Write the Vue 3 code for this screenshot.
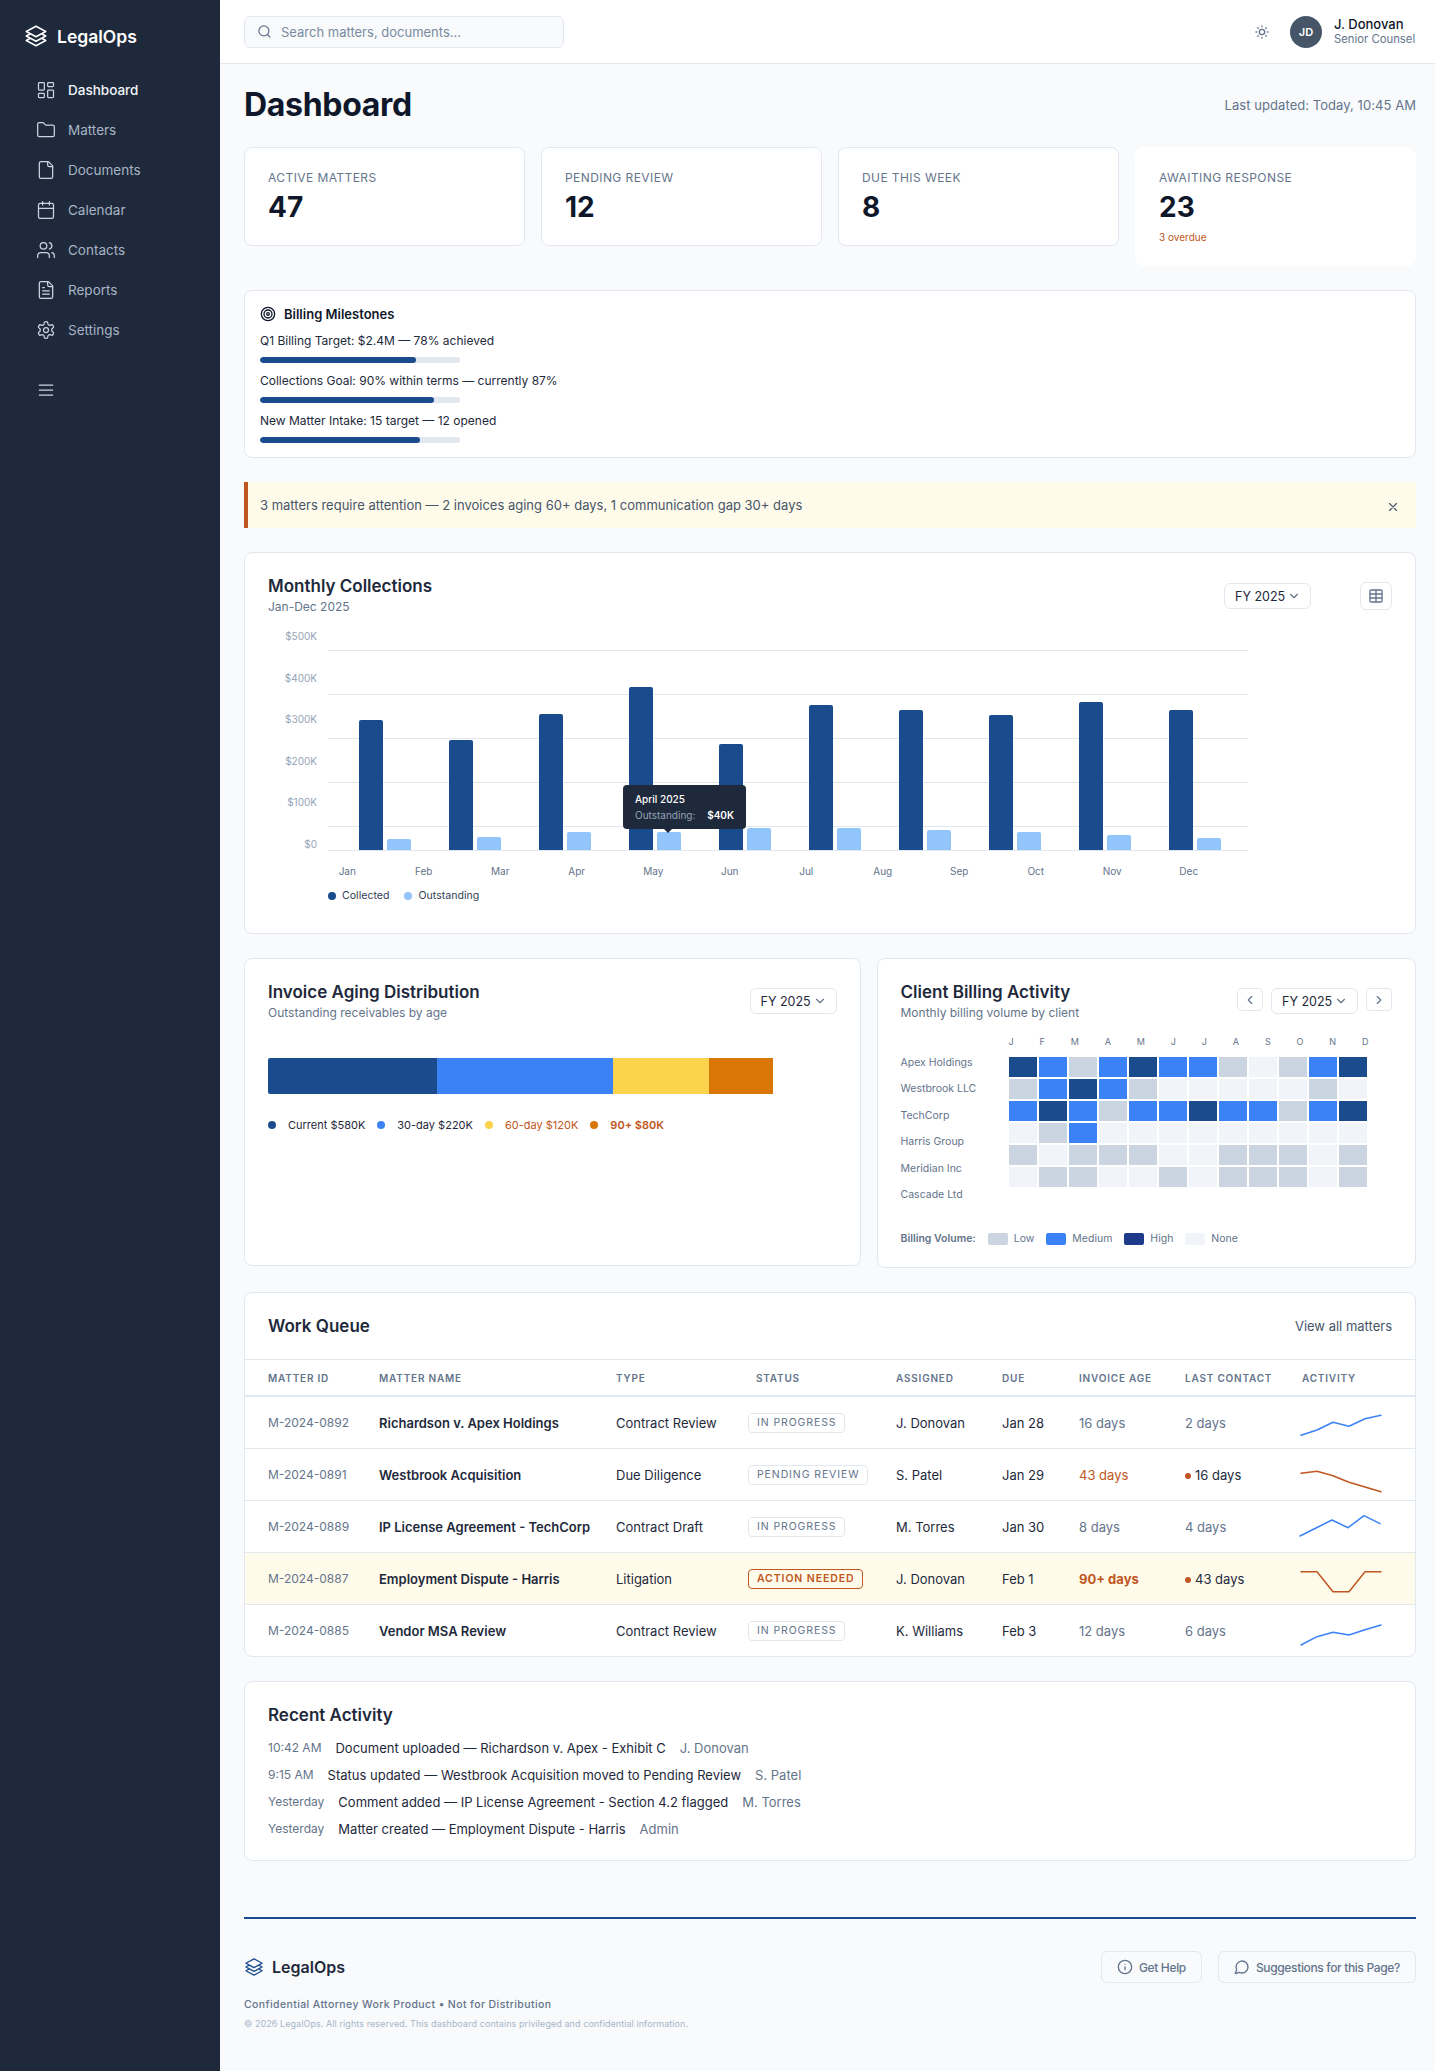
<script setup>
const nav = [
  { label: 'Dashboard', icon: 'dash', active: true },
  { label: 'Matters', icon: 'folder' },
  { label: 'Documents', icon: 'file' },
  { label: 'Calendar', icon: 'cal' },
  { label: 'Contacts', icon: 'users' },
  { label: 'Reports', icon: 'report' },
  { label: 'Settings', icon: 'gear' }
]
const stats = [
  { label: 'Active Matters', value: '47' },
  { label: 'Pending Review', value: '12' },
  { label: 'Due This Week', value: '8' },
  { label: 'Awaiting Response', value: '23', note: '3 overdue' }
]
const milestones = [
  { text: 'Q1 Billing Target: $2.4M — 78% achieved', pct: 78 },
  { text: 'Collections Goal: 90% within terms — currently 87%', pct: 87 },
  { text: 'New Matter Intake: 15 target — 12 opened', pct: 80 }
]
const yLabels = ['$500K', '$400K', '$300K', '$200K', '$100K', '$0']
const gridTops = [20, 64, 108, 152, 196]
const groups = [
  [130, 11], [110, 13], [136, 18], [163, 18], [106, 22],
  [145, 22], [140, 20], [135, 18], [148, 15], [140, 12]
]
const months = ['Jan', 'Feb', 'Mar', 'Apr', 'May', 'Jun', 'Jul', 'Aug', 'Sep', 'Oct', 'Nov', 'Dec']
const aging = [
  { w: 169, c: '#1a4b8c' }, { w: 176, c: '#3b82f6' }, { w: 96, c: '#fcd34d' }, { w: 64, c: '#d97706' }
]
const agingLegend = [
  { t: 'Current $580K', c: '#1a4b8c', k: '' },
  { t: '30-day $220K', c: '#3b82f6', k: '' },
  { t: '60-day $120K', c: '#fcd34d', k: 'warn' },
  { t: '90+ $80K', c: '#d97706', k: 'warn strong' }
]
const clients = ['Apex Holdings', 'Westbrook LLC', 'TechCorp', 'Harris Group', 'Meridian Inc', 'Cascade Ltd']
const letters = ['J', 'F', 'M', 'A', 'M', 'J', 'J', 'A', 'S', 'O', 'N', 'D']
const heat = [
  'HMLMHMMLNLMH', 'LMHMLNNNNNLN', 'MHMLMMHMMLMH', 'NLMNNNNNNNNN', 'LNLLLNNLLLNL', 'NLLNNLNLLLNL'
].join('').split('')
const legend = [
  { t: 'Low', c: '#cbd5e1' }, { t: 'Medium', c: '#3b82f6' }, { t: 'High', c: '#1e3a8a' }, { t: 'None', c: '#f1f5f9' }
]
const columns = ['Matter ID', 'Matter Name', 'Type', 'Status', 'Assigned', 'Due', 'Invoice Age', 'Last Contact', 'Activity']
const widths = [134, 237, 140, 140, 106, 77, 106, 117, 115]
const rows = [
  { id: 'M-2024-0892', name: 'Richardson v. Apex Holdings', type: 'Contract Review', status: 'In Progress', who: 'J. Donovan', due: 'Jan 28', age: '16 days', contact: '2 days', pts: '0,28.3 16,23 32,15.3 48,19.3 64,11.7 80,8.3' },
  { id: 'M-2024-0891', name: 'Westbrook Acquisition', type: 'Due Diligence', status: 'Pending Review', who: 'S. Patel', due: 'Jan 29', age: '43 days', ageK: 'warn', contact: '16 days', dot: true, pts: '0,14.3 16,12.3 32,16.7 48,23.3 64,28 80,32.7', warn: true },
  { id: 'M-2024-0889', name: 'IP License Agreement - TechCorp', type: 'Contract Draft', status: 'In Progress', who: 'M. Torres', due: 'Jan 30', age: '8 days', contact: '4 days', pts: '-1,25 15,17 31,9 47,16.7 63,4.7 79,12.7' },
  { id: 'M-2024-0887', name: 'Employment Dispute - Harris', type: 'Litigation', status: 'Action Needed', action: true, who: 'J. Donovan', due: 'Feb 1', age: '90+ days', ageK: 'warn strong', contact: '43 days', dot: true, pts: '0,8.7 16,8.7 32,28.7 48,28.7 64,8.7 80,8.7', warn: true, hl: true },
  { id: 'M-2024-0885', name: 'Vendor MSA Review', type: 'Contract Review', status: 'In Progress', who: 'K. Williams', due: 'Feb 3', age: '12 days', contact: '6 days', pts: '0,30 16,21.7 32,17.3 48,20 64,14.7 80,10' }
]
const activity = [
  { time: '10:42 AM', text: 'Document uploaded — Richardson v. Apex - Exhibit C', who: 'J. Donovan' },
  { time: '9:15 AM', text: 'Status updated — Westbrook Acquisition moved to Pending Review', who: 'S. Patel' },
  { time: 'Yesterday', text: 'Comment added — IP License Agreement - Section 4.2 flagged', who: 'M. Torres' },
  { time: 'Yesterday', text: 'Matter created — Employment Dispute - Harris', who: 'Admin' }
]
</script>

<template>
  <div class="app">
    <aside class="sidebar">
      <div class="brand">
        <svg class="brand-ico" viewBox="0 0 24 24" fill="none" stroke="currentColor" stroke-width="1.5" stroke-linecap="round" stroke-linejoin="round"><path d="M6.429 9.75 2.25 12l4.179 2.25m0-4.5 5.571 3 5.571-3m-11.142 0L2.25 7.5 12 2.25l9.75 5.25-4.179 2.25m0 0L21.75 12l-4.179 2.25m0 0 4.179 2.25L12 21.75 2.25 16.5l4.179-2.25m11.142 0-5.571 3-5.571-3"/></svg>
        <span>LegalOps</span>
      </div>
      <nav class="nav">
        <a v-for="n in nav" :key="n.label" class="nav-item" :class="{ active: n.active }">
          <svg class="nav-ico" viewBox="0 0 24 24" fill="none" stroke="currentColor" stroke-width="1.5" stroke-linecap="round" stroke-linejoin="round">
            <template v-if="n.icon === 'dash'"><rect x="3" y="3" width="7" height="9" rx="1"/><rect x="14" y="3" width="7" height="5" rx="1"/><rect x="14" y="12" width="7" height="9" rx="1"/><rect x="3" y="16" width="7" height="5" rx="1"/></template>
            <path v-else-if="n.icon === 'folder'" d="M20 20a2 2 0 0 0 2-2V8a2 2 0 0 0-2-2h-7.9a2 2 0 0 1-1.69-.9L9.6 3.9A2 2 0 0 0 7.93 3H4a2 2 0 0 0-2 2v13a2 2 0 0 0 2 2Z"/>
            <template v-else-if="n.icon === 'file'"><path d="M15 2H6a2 2 0 0 0-2 2v16a2 2 0 0 0 2 2h12a2 2 0 0 0 2-2V7Z"/><path d="M14 2v4a2 2 0 0 0 2 2h4"/></template>
            <template v-else-if="n.icon === 'cal'"><path d="M8 2v4M16 2v4"/><rect x="3" y="4" width="18" height="18" rx="2"/><path d="M3 10h18"/></template>
            <template v-else-if="n.icon === 'users'"><path d="M16 21v-2a4 4 0 0 0-4-4H6a4 4 0 0 0-4 4v2"/><circle cx="9" cy="7" r="4"/><path d="M22 21v-2a4 4 0 0 0-3-3.87"/><path d="M16 3.13a4 4 0 0 1 0 7.75"/></template>
            <template v-else-if="n.icon === 'report'"><path d="M15 2H6a2 2 0 0 0-2 2v16a2 2 0 0 0 2 2h12a2 2 0 0 0 2-2V7Z"/><path d="M14 2v4a2 2 0 0 0 2 2h4"/><path d="M10 9H8M16 13H8M16 17H8"/></template>
            <template v-else><path d="M12.22 2h-.44a2 2 0 0 0-2 2v.18a2 2 0 0 1-1 1.73l-.43.25a2 2 0 0 1-2 0l-.15-.08a2 2 0 0 0-2.73.73l-.22.38a2 2 0 0 0 .73 2.73l.15.1a2 2 0 0 1 1 1.72v.51a2 2 0 0 1-1 1.74l-.15.09a2 2 0 0 0-.73 2.73l.22.38a2 2 0 0 0 2.73.73l.15-.08a2 2 0 0 1 2 0l.43.25a2 2 0 0 1 1 1.73V20a2 2 0 0 0 2 2h.44a2 2 0 0 0 2-2v-.18a2 2 0 0 1 1-1.73l.43-.25a2 2 0 0 1 2 0l.15.08a2 2 0 0 0 2.73-.73l.22-.39a2 2 0 0 0-.73-2.73l-.15-.08a2 2 0 0 1-1-1.74v-.5a2 2 0 0 1 1-1.74l.15-.09a2 2 0 0 0 .73-2.73l-.22-.38a2 2 0 0 0-2.73-.73l-.15.08a2 2 0 0 1-2 0l-.43-.25a2 2 0 0 1-1-1.73V4a2 2 0 0 0-2-2z"/><circle cx="12" cy="12" r="3"/></template>
          </svg>
          <span>{{ n.label }}</span>
        </a>
      </nav>
      <div class="burger">
        <svg viewBox="0 0 24 24" fill="none" stroke="currentColor" stroke-width="1.5" stroke-linecap="round"><path d="M4 6h16M4 12h16M4 18h16"/></svg>
      </div>
    </aside>

    <div class="main">
      <header class="topbar">
        <div class="search">
          <svg viewBox="0 0 24 24" fill="none" stroke="currentColor" stroke-width="2" stroke-linecap="round"><circle cx="11" cy="11" r="8"/><path d="m21 21-4.3-4.3"/></svg>
          <span>Search matters, documents...</span>
        </div>
        <div class="top-right">
          <svg class="sun" viewBox="0 0 24 24" fill="none" stroke="currentColor" stroke-width="2" stroke-linecap="round"><circle cx="12" cy="12" r="4"/><path d="M12 3v1M12 20v1M3 12h1M20 12h1M5.6 5.6l.7.7M17.7 17.7l.7.7M5.6 18.4l.7-.7M17.7 6.3l.7-.7"/></svg>
          <div class="avatar">JD</div>
          <div class="user">
            <div class="user-name">J. Donovan</div>
            <div class="user-role">Senior Counsel</div>
          </div>
        </div>
      </header>

      <main class="content">
        <div class="page-head">
          <h1>Dashboard</h1>
          <span class="updated">Last updated: Today, 10:45 AM</span>
        </div>

        <section class="stats">
          <div v-for="s in stats" :key="s.label" class="stat" :class="{ plain: s.note }">
            <div class="stat-label">{{ s.label }}</div>
            <div class="stat-value">{{ s.value }}</div>
            <div v-if="s.note" class="stat-note">{{ s.note }}</div>
          </div>
        </section>

        <section class="card milestones">
          <div class="ms-title">
            <svg viewBox="0 0 24 24" fill="none" stroke="currentColor" stroke-width="2"><circle cx="12" cy="12" r="10"/><circle cx="12" cy="12" r="6"/><circle cx="12" cy="12" r="2"/></svg>
            <span>Billing Milestones</span>
          </div>
          <div v-for="m in milestones" :key="m.text" class="ms-item">
            <div class="ms-text">{{ m.text }}</div>
            <div class="ms-track"><div class="ms-fill" :style="{ width: m.pct + '%' }"></div></div>
          </div>
        </section>

        <section class="alert">
          <span>3 matters require attention — 2 invoices aging 60+ days, 1 communication gap 30+ days</span>
          <svg viewBox="0 0 24 24" fill="none" stroke="currentColor" stroke-width="2" stroke-linecap="round"><path d="M18 6 6 18M6 6l12 12"/></svg>
        </section>

        <section class="card chart-card">
          <div class="chart-head">
            <div>
              <h2>Monthly Collections</h2>
              <p class="sub">Jan-Dec 2025</p>
            </div>
            <div class="chart-tools">
              <div class="select"><span>FY 2025</span><svg viewBox="0 0 24 24" fill="none" stroke="currentColor" stroke-width="2" stroke-linecap="round" stroke-linejoin="round"><path d="m6 9 6 6 6-6"/></svg></div>
              <div class="icon-btn">
                <svg viewBox="0 0 24 24" fill="none" stroke="currentColor" stroke-width="2" stroke-linecap="round" stroke-linejoin="round"><path d="M12 3v18"/><rect x="3" y="3" width="18" height="18" rx="2"/><path d="M3 9h18M3 15h18"/></svg>
              </div>
            </div>
          </div>
          <div class="chart-body">
            <div class="y-axis"><span v-for="y in yLabels" :key="y">{{ y }}</span></div>
            <div class="plot">
              <i v-for="t in gridTops" :key="t" class="gridline" :style="{ top: t + 'px' }"></i>
              <div class="bars">
                <div v-for="(g, i) in groups" :key="i" class="group">
                  <div class="bar dark" :style="{ height: g[0] + 'px' }"></div>
                  <div class="bar light" :style="{ height: g[1] + 'px' }"></div>
                </div>
              </div>
              <div class="tooltip">
                <div class="tip-title">April 2025</div>
                <div class="tip-row"><span>Outstanding:</span><b>$40K</b></div>
              </div>
            </div>
          </div>
          <div class="x-axis"><span v-for="m in months" :key="m">{{ m }}</span></div>
          <div class="chart-legend">
            <span class="lg"><i class="dot" style="background:#1a4b8c"></i>Collected</span>
            <span class="lg"><i class="dot" style="background:#93c5fd"></i>Outstanding</span>
          </div>
        </section>

        <section class="two-col">
          <div class="card panel aging">
            <div class="panel-head">
              <div>
                <h2>Invoice Aging Distribution</h2>
                <p class="sub">Outstanding receivables by age</p>
              </div>
              <div class="select"><span>FY 2025</span><svg viewBox="0 0 24 24" fill="none" stroke="currentColor" stroke-width="2" stroke-linecap="round" stroke-linejoin="round"><path d="m6 9 6 6 6-6"/></svg></div>
            </div>
            <div class="aging-bar">
              <div v-for="a in aging" :key="a.c" class="seg" :style="{ width: a.w + 'px', background: a.c }"></div>
            </div>
            <div class="aging-legend">
              <span v-for="l in agingLegend" :key="l.t" class="al" :class="l.k">
                <i class="dot" :style="{ background: l.c }"></i>{{ l.t }}
              </span>
            </div>
          </div>

          <div class="card panel">
            <div class="panel-head">
              <div>
                <h2>Client Billing Activity</h2>
                <p class="sub">Monthly billing volume by client</p>
              </div>
              <div class="heat-tools">
                <div class="mini-btn"><svg viewBox="0 0 24 24" fill="none" stroke="currentColor" stroke-width="2" stroke-linecap="round" stroke-linejoin="round"><path d="m15 18-6-6 6-6"/></svg></div>
                <div class="select"><span>FY 2025</span><svg viewBox="0 0 24 24" fill="none" stroke="currentColor" stroke-width="2" stroke-linecap="round" stroke-linejoin="round"><path d="m6 9 6 6 6-6"/></svg></div>
                <div class="mini-btn"><svg viewBox="0 0 24 24" fill="none" stroke="currentColor" stroke-width="2" stroke-linecap="round" stroke-linejoin="round"><path d="m9 18 6-6-6-6"/></svg></div>
              </div>
            </div>
            <div class="heat-body">
              <div class="heat-clients"><span v-for="c in clients" :key="c">{{ c }}</span></div>
              <div class="heat-main">
                <div class="heat-months"><span v-for="(l, i) in letters" :key="i">{{ l }}</span></div>
                <div class="heat-grid">
                  <i v-for="(h, i) in heat" :key="i" class="cell" :class="'h' + h"></i>
                </div>
              </div>
            </div>
            <div class="heat-legend">
              <b>Billing Volume:</b>
              <span v-for="l in legend" :key="l.t" class="key"><i :style="{ background: l.c }"></i>{{ l.t }}</span>
            </div>
          </div>
        </section>

        <section class="card queue">
          <div class="queue-head">
            <h2>Work Queue</h2>
            <span class="view-all">View all matters</span>
          </div>
          <table>
            <colgroup><col v-for="(w, i) in widths" :key="i" :style="{ width: w + 'px' }" /></colgroup>
            <thead>
              <tr><th v-for="c in columns" :key="c">{{ c }}</th></tr>
            </thead>
            <tbody>
              <tr v-for="r in rows" :key="r.id" :class="{ attn: r.hl }">
                <td class="id">{{ r.id }}</td>
                <td class="name">{{ r.name }}</td>
                <td>{{ r.type }}</td>
                <td><span class="badge" :class="{ action: r.action }">{{ r.status }}</span></td>
                <td>{{ r.who }}</td>
                <td>{{ r.due }}</td>
                <td class="muted" :class="r.ageK">{{ r.age }}</td>
                <td :class="{ muted: !r.dot }"><i v-if="r.dot" class="alert-dot"></i>{{ r.contact }}</td>
                <td class="spark-cell">
                  <svg class="spark" viewBox="0 0 80 32" fill="none" stroke-width="1.5" stroke-linejoin="round" stroke-linecap="round" :stroke="r.warn ? '#c05621' : '#3b82f6'"><polyline :points="r.pts"/></svg>
                </td>
              </tr>
            </tbody>
          </table>
        </section>

        <section class="card recent">
          <h2>Recent Activity</h2>
          <div v-for="a in activity" :key="a.text" class="recent-row">
            <span class="r-time">{{ a.time }}</span>
            <span class="r-text">{{ a.text }}</span>
            <span class="r-who">{{ a.who }}</span>
          </div>
        </section>

        <footer class="footer">
          <div class="footer-top">
            <div class="foot-brand">
              <svg viewBox="0 0 24 24" fill="none" stroke="#1a4b8c" stroke-width="1.5" stroke-linecap="round" stroke-linejoin="round"><path d="M6.429 9.75 2.25 12l4.179 2.25m0-4.5 5.571 3 5.571-3m-11.142 0L2.25 7.5 12 2.25l9.75 5.25-4.179 2.25m0 0L21.75 12l-4.179 2.25m0 0 4.179 2.25L12 21.75 2.25 16.5l4.179-2.25m11.142 0-5.571 3-5.571-3"/></svg>
              <span>LegalOps</span>
            </div>
            <div class="foot-btns">
              <div class="foot-btn">
                <svg viewBox="0 0 24 24" fill="none" stroke="currentColor" stroke-width="2" stroke-linecap="round"><circle cx="12" cy="12" r="10"/><path d="M12 16v-4M12 8h.01"/></svg>
                Get Help
              </div>
              <div class="foot-btn">
                <svg viewBox="0 0 24 24" fill="none" stroke="currentColor" stroke-width="2" stroke-linecap="round" stroke-linejoin="round"><path d="M7.9 20A9 9 0 1 0 4 16.1L2 22Z"/></svg>
                Suggestions for this Page?
              </div>
            </div>
          </div>
          <div class="conf">Confidential Attorney Work Product • Not for Distribution</div>
          <div class="copy">© 2026 LegalOps. All rights reserved. This dashboard contains privileged and confidential information.</div>
        </footer>
      </main>
    </div>
  </div>
</template>

<style>
html, body { margin: 0; background: #f8fafc; }
</style>

<style scoped>
* { box-sizing: border-box; }
.app { display: flex; min-height: 2071px; font-family: Inter, "Liberation Sans", sans-serif; color: #0f172a; background: #f8fafc; }
.sidebar { width: 220px; flex: none; background: #1e293b; color: #fff; }
.brand { display: flex; align-items: center; gap: 9px; height: 70px; padding: 2px 0 0 24px; font-size: 17.5px; font-weight: 600; }
.brand-ico { width: 24px; height: 24px; }
.nav { display: flex; flex-direction: column; }
.nav-item { display: flex; align-items: center; gap: 12px; height: 40px; padding-left: 36px; font-size: 13.5px; color: #a8b4c5; }
.nav-item.active { color: #f1f5f9; font-weight: 500; }
.nav-ico { width: 20px; height: 20px; color: #cbd5e1; }
.burger { margin: 30px 0 0 36px; width: 20px; height: 20px; color: #cbd5e1; }
.burger svg { width: 20px; height: 20px; display: block; }

.main { flex: 1; min-width: 0; }
.topbar { height: 64px; background: #fff; border-bottom: 1px solid #e2e8f0; display: flex; align-items: center; justify-content: space-between; padding: 0 19px 0 24px; }
.search { width: 320px; height: 32px; background: #f8fafc; border: 1px solid #e2e8f0; border-radius: 6px; display: flex; align-items: center; gap: 9px; padding-left: 12px; font-size: 13px; color: #7b8aa0; }
.search svg { width: 15px; height: 15px; color: #64748b; }
.top-right { display: flex; align-items: center; }
.sun { width: 16px; height: 16px; color: #64748b; margin-right: 20px; }
.avatar { width: 32px; height: 32px; border-radius: 50%; background: #475569; color: #fff; font-size: 11px; font-weight: 600; display: flex; align-items: center; justify-content: center; margin-right: 12px; }
.user { width: 82px; }
.user-name { font-size: 13px; font-weight: 500; line-height: 15px; }
.user-role { font-size: 11.3px; color: #64748b; line-height: 14px; white-space: nowrap; }

.content { padding: 24px 19px 0 24px; display: flex; flex-direction: column; gap: 24px; }
.page-head { display: flex; align-items: center; justify-content: space-between; height: 34px; margin-bottom: 1px; }
h1 { margin: 0; font-size: 32px; font-weight: 700; line-height: 34px; letter-spacing: -.3px; }
.updated { font-size: 13px; letter-spacing: .06px; color: #64748b; }

.stats { display: grid; grid-template-columns: repeat(4, 1fr); gap: 16px; align-items: start; }
.stat { background: #fff; border: 1px solid #e2e8f0; border-radius: 8px; padding: 23px; height: 99px; }
.stat.plain { border-color: #fff; height: 119px; }
.stat-label { font-size: 12px; line-height: 14px; letter-spacing: .42px; text-transform: uppercase; color: #64748b; }
.stat-value { font-size: 28px; font-weight: 700; line-height: 32px; margin-top: 6px; }
.stat-note { font-size: 10px; line-height: 14px; color: #c05621; margin-top: 7px; }

.card { background: #fff; border: 1px solid #e2e8f0; border-radius: 8px; }
.milestones { padding: 15px 15px 15px; height: 168px; }
.ms-title { display: flex; align-items: center; gap: 8px; font-size: 13px; font-weight: 600; line-height: 15px; margin-bottom: 11px; }
.ms-title svg { width: 16px; height: 16px; }
.ms-item { margin-bottom: 10px; }
.ms-text { font-size: 12px; line-height: 16px; color: #1e293b; margin-bottom: 8px; }
.ms-track { width: 200px; height: 6px; background: #e2e8f0; border-radius: 3px; overflow: hidden; }
.ms-fill { height: 100%; background: #1a4b8c; border-radius: 3px; }

.alert { height: 46px; background: #fffbeb; border-left: 4px solid #c05621; display: flex; align-items: center; justify-content: space-between; padding: 0 16px 0 12px; font-size: 13px; color: #475569; }
.alert svg { width: 14px; height: 14px; color: #475569; margin-top: 4px; }

h2 { margin: 0; font-size: 17px; font-weight: 600; line-height: 18px; color: #1e293b; }
.sub { margin: 4px 0 0; font-size: 12px; line-height: 16px; color: #64748b; }
.chart-card { padding: 24px 23px 29px; height: 382px; }
.chart-head { display: flex; align-items: center; justify-content: space-between; margin-bottom: 15px; }
.chart-tools { display: flex; align-items: center; gap: 49px; }
.select { height: 26px; width: 87px; flex: none; white-space: nowrap; background: #fff; border: 1px solid #e2e8f0; border-radius: 6px; display: flex; align-items: center; justify-content: space-between; padding: 0 9px 0 10px; font-size: 12.5px; color: #1e293b; }
.select svg { width: 14px; height: 14px; flex: none; color: #64748b; }
.icon-btn { width: 32px; height: 28px; border: 1px solid #e2e8f0; border-radius: 6px; display: flex; align-items: center; justify-content: center; color: #64748b; }
.icon-btn svg { width: 16px; height: 16px; }

.chart-body { display: flex; width: 980px; }
.y-axis { width: 49px; margin-right: 11px; height: 220px; display: flex; flex-direction: column; justify-content: space-between; align-items: flex-end; font-size: 10px; line-height: 12px; color: #94a3b8; }
.plot { position: relative; width: 920px; height: 221px; border-bottom: 1px solid #e2e8f0; }
.gridline { position: absolute; left: 0; right: 0; height: 1px; background: #e2e8f0; }
.bars { position: absolute; left: 30.5px; bottom: 0; display: flex; align-items: flex-end; gap: 38px; }
.group { display: flex; align-items: flex-end; gap: 4px; }
.bar { width: 24px; border-radius: 2px 2px 0 0; }
.bar.dark { background: #1a4b8c; }
.bar.light { background: #93c5fd; }
.tooltip { position: absolute; left: 295px; top: 155px; width: 123px; height: 44px; background: #1e293b; color: #fff; border-radius: 4px; padding: 6px 12px; font-size: 10px; line-height: 16px; }
.tooltip::after { content: ""; position: absolute; left: 41px; bottom: -4px; border: 4px solid transparent; border-bottom: 0; border-top-color: #1e293b; }
.tip-title { font-weight: 500; }
.tip-row { display: flex; justify-content: space-between; color: #94a3b8; }
.tip-row b { color: #fff; font-weight: 600; }
.x-axis { display: flex; width: 918px; margin: 13px 0 0 41px; font-size: 10px; line-height: 14px; color: #64748b; }
.x-axis span { flex: 1; text-align: center; }
.chart-legend { display: flex; gap: 15px; margin: 11px 0 0 60px; font-size: 10.6px; line-height: 14px; color: #334155; }
.lg { display: flex; align-items: center; gap: 6px; }
.dot { display: block; width: 8px; height: 8px; border-radius: 50%; }

.two-col { display: grid; grid-template-columns: 8fr 7fr; gap: 16px; align-items: start; }
.panel { padding: 24px 23px; height: 310px; }
.panel.aging { height: 308px; }
.panel-head { display: flex; justify-content: space-between; align-items: flex-start; }
.panel-head .select { margin-top: 5px; }
.aging-bar { display: flex; height: 36px; margin-top: 37px; border-radius: 2px; overflow: hidden; }
.seg { height: 100%; }
.aging-legend { display: flex; gap: 12px; margin-top: 24px; font-size: 11px; line-height: 14px; color: #1e293b; }
.al { display: flex; align-items: center; gap: 12px; }
.al.warn { color: #c05621; }
.al.strong { font-weight: 600; }
.heat-tools { display: flex; align-items: flex-start; gap: 8px; margin-top: 5px; }
.heat-tools .select { margin-top: 0; }
.mini-btn { width: 26px; height: 23px; border: 1px solid #e2e8f0; border-radius: 4px; display: flex; align-items: center; justify-content: center; color: #64748b; }
.mini-btn svg { width: 14px; height: 14px; }
.heat-body { display: flex; margin-top: 15px; }
.heat-clients { width: 108px; margin-top: 14px; display: flex; flex-direction: column; font-size: 10.5px; color: #64748b; }
.heat-clients span { height: 26.4px; line-height: 26.4px; }
.heat-main { width: 360px; }
.heat-months { display: flex; justify-content: space-between; font-size: 9px; line-height: 12px; color: #64748b; margin-bottom: 9px; }
.heat-grid { display: grid; grid-template-columns: repeat(12, 28px); grid-auto-rows: 20px; gap: 2px; }
.cell { display: block; }
.hH { background: #1a4b8c; }
.hM { background: #3b82f6; }
.hL { background: #cbd5e1; }
.hN { background: #f1f5f9; }
.heat-legend { display: flex; align-items: center; gap: 12px; margin-top: 24px; font-size: 10.5px; line-height: 14px; color: #64748b; }
.heat-legend b { font-weight: 600; }
.key { display: flex; align-items: center; gap: 6px; }
.key i { display: block; width: 20px; height: 12px; border-radius: 2px; }

.queue { overflow: hidden; }
.queue-head { height: 67px; border-bottom: 1px solid #e2e8f0; display: flex; align-items: center; justify-content: space-between; padding: 0 23px; }
.view-all { font-size: 13px; color: #475569; }
table { width: 1170px; table-layout: fixed; border-collapse: separate; border-spacing: 0; }
th { height: 37px; border-bottom: 2px solid #e2e8f0; text-align: left; padding: 0; font-size: 10px; font-weight: 600; letter-spacing: .8px; text-transform: uppercase; color: #64748b; }
td { height: 52px; border-bottom: 1px solid #e2e8f0; padding: 0; font-size: 13px; color: #1e293b; white-space: nowrap; }
th:first-child, td:first-child { padding-left: 23px; }
tr:last-child td { border-bottom: 0; height: 51px; }
tr.attn td { background: #fffbeb; }
td.id { font-size: 12px; color: #64748b; }
td.name { font-weight: 600; }
td.muted { color: #64748b; }
td.warn { color: #c05621; }
td.strong { font-weight: 700; }
.badge { display: inline-block; height: 20px; line-height: 18px; margin-left: -8px; padding: 0 8px; border: 1px solid #e2e8f0; border-radius: 4px; font-size: 10.5px; letter-spacing: .9px; text-transform: uppercase; color: #64748b; background: #fff; }
.badge.action { border-color: #c05621; color: #c05621; background: transparent; font-weight: 600; }
.alert-dot { display: inline-block; width: 6px; height: 6px; border-radius: 50%; background: #c05621; margin-right: 4px; vertical-align: 1px; }
.spark { display: block; width: 80px; height: 32px; overflow: visible; margin-left: -1px; }

.recent { padding: 24px 23px; height: 180px; }
.recent-row { display: flex; align-items: center; gap: 14px; margin-top: 11px; font-size: 13px; line-height: 16px; color: #1e293b; }
.recent h2 + .recent-row { margin-top: 16px; }
.r-time { font-size: 12px; color: #64748b; }
.r-who { color: #64748b; }

.footer { margin-top: 32px; border-top: 2px solid #1a4b8c; padding-top: 32px; }
.footer-top { display: flex; align-items: center; justify-content: space-between; }
.foot-brand { display: flex; align-items: center; gap: 8px; font-size: 16px; font-weight: 600; color: #1e293b; }
.foot-brand svg { width: 20px; height: 20px; }
.foot-btns { display: flex; gap: 16px; }
.foot-btn { height: 32px; display: flex; align-items: center; gap: 6px; padding: 0 15px; border: 1px solid #e2e8f0; border-radius: 6px; font-size: 12px; letter-spacing: -.35px; font-weight: 500; color: #64748b; }
.foot-btn svg { width: 16px; height: 16px; }
.conf { margin-top: 15px; font-size: 10.5px; line-height: 14px; font-weight: 500; letter-spacing: .4px; color: #64748b; }
.copy { margin-top: 6px; font-size: 9px; line-height: 12px; letter-spacing: .07px; color: #a9b6c8; }
</style>
